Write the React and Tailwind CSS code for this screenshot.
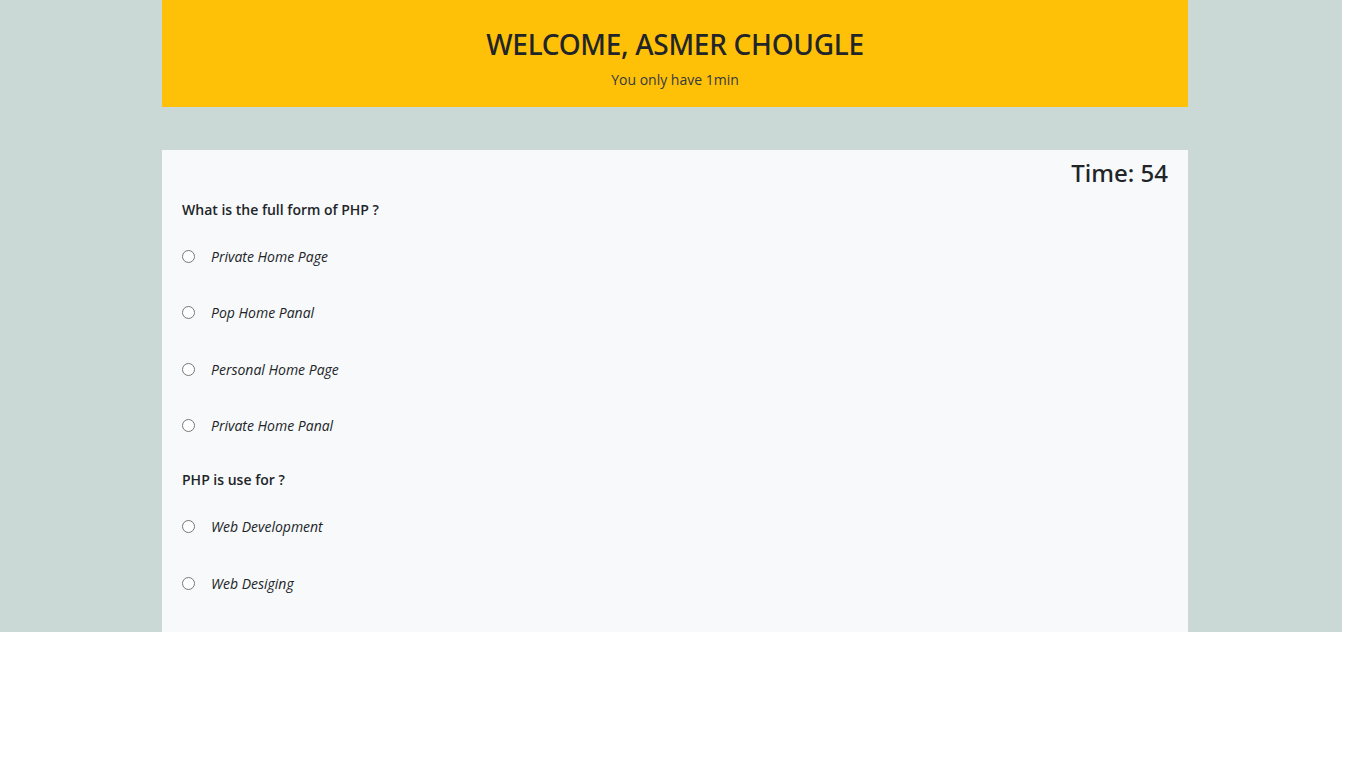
const questions = [
  {
    text: "What is the full form of PHP ?",
    options: ["Private Home Page", "Pop Home Panal", "Personal Home Page", "Private Home Panal"],
  },
  {
    text: "PHP is use for ?",
    options: ["Web Development", "Web Desiging"],
  },
];

export default function App() {
  return (
    <div className="w-[1342px] h-[632px] bg-[#cad9d6] text-[#212529] font-['Open_Sans','Noto_Sans',sans-serif] overflow-hidden">
      <div className="ml-[162px] w-[1026px]">
        <header className="h-[107px] bg-[#ffc107] flex flex-col items-center pt-[28px]">
          <h3 className="text-[28px] leading-[1.2] mb-[7px] font-['Noto_Sans',sans-serif] font-medium tracking-[-0.3px]">
            WELCOME, ASMER CHOUGLE
          </h3>
          <p className="text-[14px] leading-[21px] text-[#343a40]">You only have 1min</p>
        </header>

        <div className="mt-[43px] h-[482px] bg-[#f8f9fa] overflow-hidden">
          <div className="pt-[9px] px-5 text-right">
            <h4 className="text-[24px] leading-[1.2] font-['Noto_Sans',sans-serif] font-medium">Time: 54</h4>
          </div>
          <div className="px-5 pt-[11px]">
            {questions.map((q, qi) => (
              <div key={qi} className={qi > 0 ? "mt-[33px]" : ""}>
                <p className="text-[14px] leading-[21px] font-semibold">{q.text}</p>
                {q.options.map((opt, oi) => (
                  <label
                    key={opt}
                    className={
                      "flex items-center h-[21px] " + (oi === 0 ? "mt-[26px]" : "mt-[35.5px]")
                    }
                  >
                    <input type="radio" name={"q" + qi} className="w-[13px] h-[13px] m-0" />
                    <span className="ml-[16px] text-[14px] italic">{opt}</span>
                  </label>
                ))}
              </div>
            ))}
          </div>
        </div>
      </div>
    </div>
  );
}
